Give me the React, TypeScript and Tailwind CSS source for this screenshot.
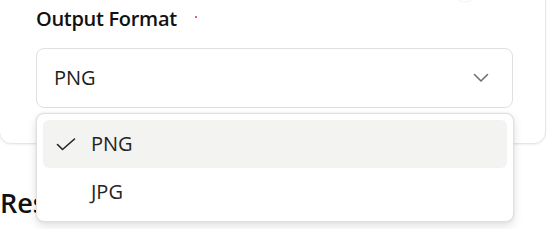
const font = { fontFamily: '"Open Sans", "Noto Sans", "Liberation Sans", sans-serif' };

function ChevronDown() {
  return (
    <svg width="16" height="10" viewBox="0 0 16 10" fill="none">
      <path d="M1.5 1.5 L8 8 L14.5 1.5" stroke="#707070" strokeWidth="1.6" strokeLinecap="round" strokeLinejoin="round" />
    </svg>
  );
}

function Check() {
  return (
    <svg width="20" height="13" viewBox="0 0 20 13" fill="none">
      <path d="M1.5 6.5 L6.5 11.5 L18.5 1" stroke="#242424" strokeWidth="1.6" strokeLinecap="round" strokeLinejoin="round" />
    </svg>
  );
}

export default function App() {
  return (
    <div className="relative h-[229px] w-[547px] overflow-hidden bg-white text-[#242424]" style={font}>
      {/* faint shadow at top */}
      <div className="absolute -top-[15px] left-[456px] h-[16px] w-[18px] rounded-full bg-white shadow-[0_1px_2px_rgba(0,0,0,0.06)]" />

      {/* settings card */}
      <div className="-mt-[24px] -ml-px w-[547px] rounded-b-xl border border-[#e6e6e6] bg-white px-[36px] pb-[35px] pt-[27px] shadow-[0_1px_2px_rgba(0,0,0,0.06)]">
        <div className="flex items-center h-[30px]">
          <span className="text-[20px] font-semibold leading-[30px] tracking-[-0.3px] text-[#111]">Output Format</span>
          <span className="ml-[18px] mt-[-4px] h-[2px] w-[2px] rounded-full bg-[#d13438]" />
        </div>
        <div className="mt-[14px] flex h-[60px] w-[477px] items-center justify-between rounded-lg border border-[#e0e0e0] bg-white pl-[17px] pr-[23px]">
          <span className="text-[20px] leading-[28px] text-[#1c1c1c]">PNG</span>
          <ChevronDown />
        </div>
      </div>

      {/* section heading behind popup */}
      <h2 className="mt-[42px] text-[27px] font-semibold leading-[34px] text-[#111]">Results</h2>

      {/* open listbox */}
      <div className="absolute left-[36px] top-[113px] w-[478px] rounded-lg border border-[#e0e0e0] bg-white px-[6px] pb-[5px] pt-[6px] shadow-[0_4px_10px_rgba(0,0,0,0.12),0_0_2px_rgba(0,0,0,0.1)]">
        <div className="flex h-[48px] items-center rounded-md bg-[#f3f3f2] pl-[13px]">
          <Check />
          <span className="ml-[15px] text-[20px] leading-[28px]">PNG</span>
        </div>
        <div className="flex h-[48px] items-center pl-[48px]">
          <span className="text-[20px] leading-[28px]">JPG</span>
        </div>
      </div>
    </div>
  );
}
